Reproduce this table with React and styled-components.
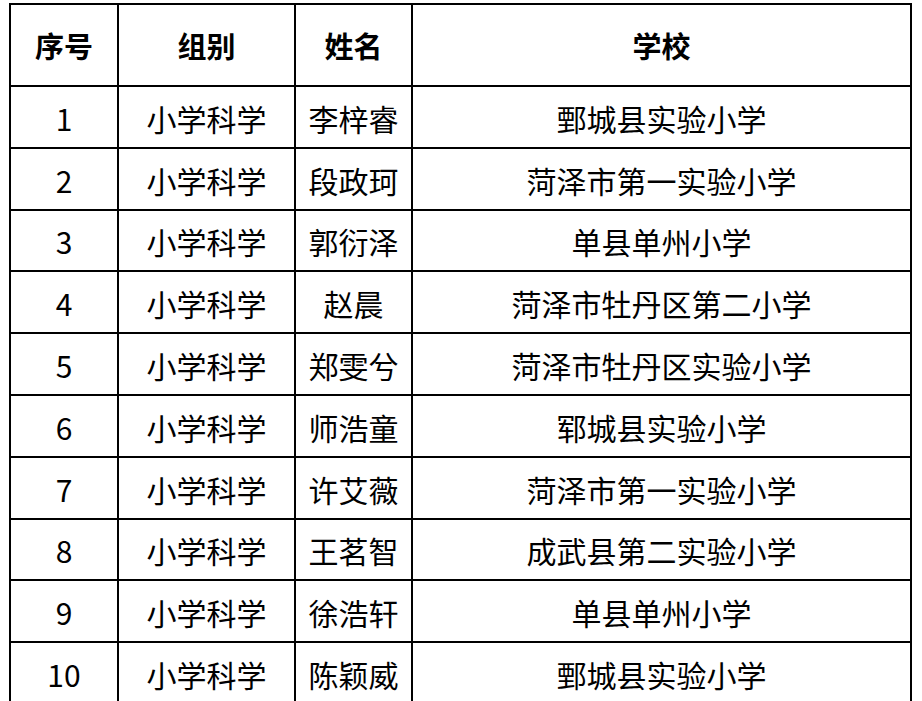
import styled, { createGlobalStyle } from "styled-components";

const GlobalStyle = createGlobalStyle`
  body {
    margin: 0;
    background: #ffffff;
    font-family: "Noto Sans CJK SC", "Noto Sans", sans-serif;
    color: #000000;
  }
`;

const rows = [
  ["1", "小学科学", "李梓睿", "鄄城县实验小学"],
  ["2", "小学科学", "段政珂", "菏泽市第一实验小学"],
  ["3", "小学科学", "郭衍泽", "单县单州小学"],
  ["4", "小学科学", "赵晨", "菏泽市牡丹区第二小学"],
  ["5", "小学科学", "郑雯兮", "菏泽市牡丹区实验小学"],
  ["6", "小学科学", "师浩童", "郓城县实验小学"],
  ["7", "小学科学", "许艾薇", "菏泽市第一实验小学"],
  ["8", "小学科学", "王茗智", "成武县第二实验小学"],
  ["9", "小学科学", "徐浩轩", "单县单州小学"],
  ["10", "小学科学", "陈颖威", "鄄城县实验小学"],
];

//Column widths measured between grid lines
const widths = [108, 177, 117, 499];

const Page = styled.div`
  padding: 3px 0 0 9px;
  height: 701px;
  overflow: hidden;
  box-sizing: border-box;
`;

const Table = styled.table`
  border-collapse: collapse;
  table-layout: fixed;
  width: 903px;
`;

const HeadCell = styled.th`
  border: 2px solid #000;
  height: 80px;
  padding: 0;
  font-size: 29px;
  font-weight: 700;
  text-align: center;
  vertical-align: middle;
`;

const Cell = styled.td`
  border: 2px solid #000;
  height: 57.8px;
  padding: 2px 0 0;
  font-size: 30px;
  font-weight: 400;
  text-align: center;
  vertical-align: middle;
  white-space: nowrap;
`;

const App = () => {
  return (
    <>
      <GlobalStyle />
      <Page>
        <Table>
          <colgroup>
            {widths.map((w, i) => (
              <col key={i} style={{ width: w }} />
            ))}
          </colgroup>
          <thead>
            <tr>
              <HeadCell>序号</HeadCell>
              <HeadCell>组别</HeadCell>
              <HeadCell>姓名</HeadCell>
              <HeadCell>学校</HeadCell>
            </tr>
          </thead>
          <tbody>
            {rows.map((row) => (
              <tr key={row[0]}>
                {row.map((text, i) => (
                  <Cell key={i}>{text}</Cell>
                ))}
              </tr>
            ))}
          </tbody>
        </Table>
      </Page>
    </>
  );
};

export default App;
